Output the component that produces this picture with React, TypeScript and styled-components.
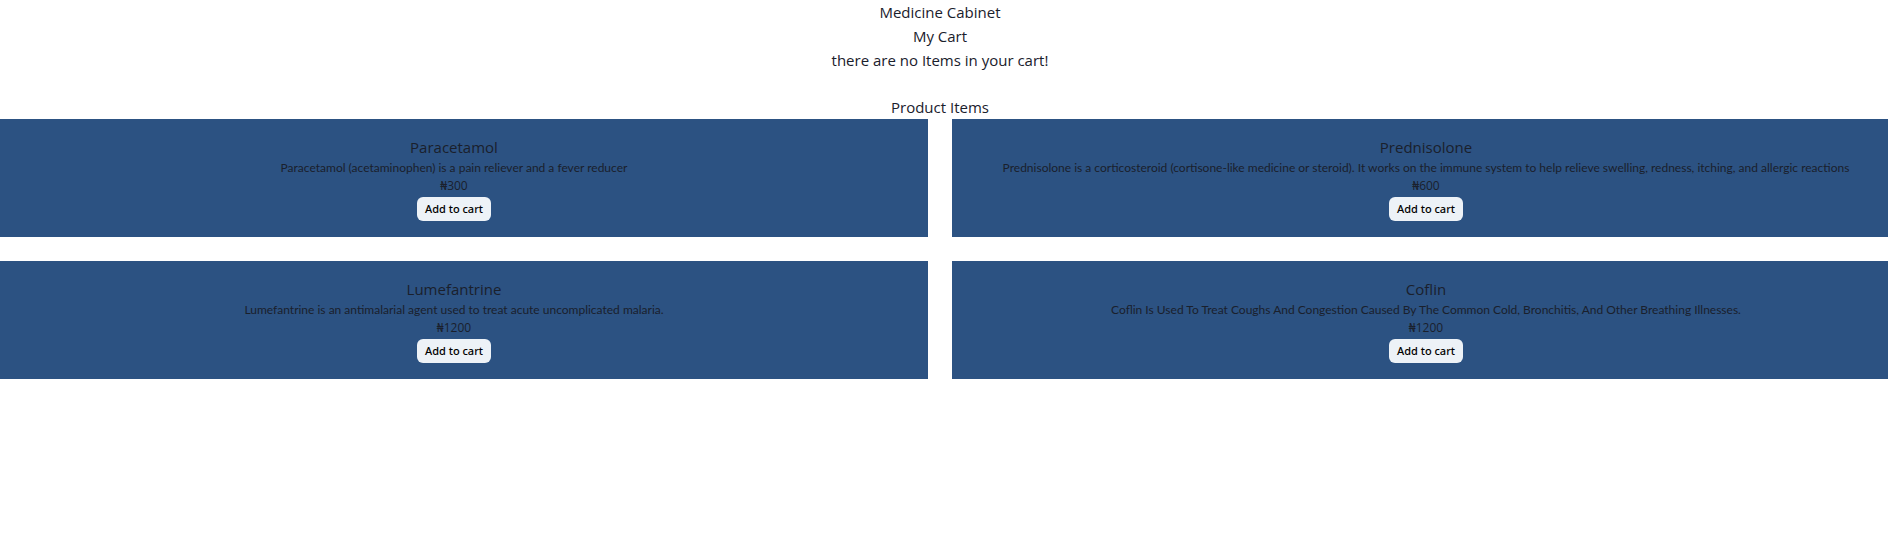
import React from "react";
import styled, { createGlobalStyle } from "styled-components";

const GlobalStyle = createGlobalStyle`
  *, *::before, *::after { box-sizing: border-box; }
  body {
    margin: 0;
    background: #ffffff;
    color: #1a202c;
    font-family: "Segoe UI", "Open Sans", "Noto Sans", sans-serif;
    font-size: 15px;
    line-height: 24px;
  }
  h1, h2, h3, p { margin: 0; font-size: inherit; font-weight: 400; }
`;

const Page = styled.main`
  padding-right: 8px;
  overflow: hidden;
  text-align: center;
`;

const Section = styled.section`
  margin-bottom: 24px;
`;

const SectionTitle = styled.h2`
  line-height: 23px;
`;

const ProductGrid = styled.div`
  display: grid;
  grid-template-columns: 1fr 1fr;
  gap: 24px;
  margin: 0 -20px;
`;

const Card = styled.article`
  display: flex;
  flex-direction: column;
  align-items: center;
  padding: 16px;
  background: #2c5282;
`;

const Name = styled.h3`
  line-height: 24px;
`;

const Description = styled.p`
  font-family: "Segoe UI", Lato, "Noto Sans", sans-serif;
  font-size: 12px;
  line-height: 18px;
`;

const Price = styled.p`
  font-size: 12px;
  line-height: 18px;
`;

const AddButton = styled.button`
  height: 24px;
  margin-top: 2px;
  padding: 0 8px;
  border: 0;
  border-radius: 6px;
  background: #edf2f7;
  color: #000000;
  font-family: "Segoe UI", "Noto Sans", sans-serif;
  font-size: 11px;
  font-weight: 500;
  line-height: 14px;
`;

interface Product {
  name: string;
  description: string;
  price: number;
}

const products: Product[] = [
  { name: "Paracetamol", description: "Paracetamol (acetaminophen) is a pain reliever and a fever reducer", price: 300 },
  { name: "Prednisolone", description: "Prednisolone is a corticosteroid (cortisone-like medicine or steroid). It works on the immune system to help relieve swelling, redness, itching, and allergic reactions", price: 600 },
  { name: "Lumefantrine", description: "Lumefantrine is an antimalarial agent used to treat acute uncomplicated malaria.", price: 1200 },
  { name: "Coflin", description: "Coflin Is Used To Treat Coughs And Congestion Caused By The Common Cold, Bronchitis, And Other Breathing Illnesses.", price: 1200 },
];

export default function App() {
  return (
    <Page>
      <GlobalStyle />
      <h1>Medicine Cabinet</h1>
      <Section>
        <h2>My Cart</h2>
        <p>there are no Items in your cart!</p>
      </Section>
      <SectionTitle>Product Items</SectionTitle>
      <ProductGrid>
        {products.map((product) => (
          <Card key={product.name}>
            <Name>{product.name}</Name>
            <Description>{product.description}</Description>
            <Price>₦{product.price}</Price>
            <AddButton type="button">Add to cart</AddButton>
          </Card>
        ))}
      </ProductGrid>
    </Page>
  );
}
